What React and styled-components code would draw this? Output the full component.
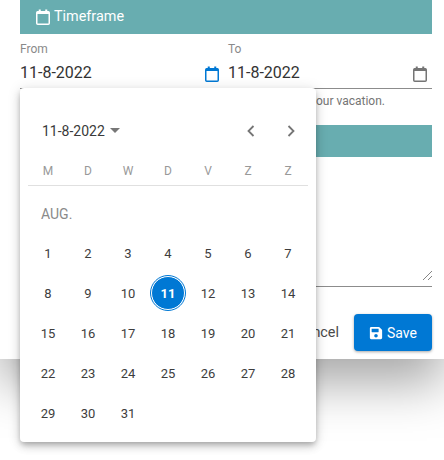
import React from "react";
import styled, { createGlobalStyle } from "styled-components";
import { FaSave } from "react-icons/fa";

const GlobalStyle = createGlobalStyle`
  html, body {
    margin: 0;
    height: 100%;
    background: #fff;
    overflow: hidden;
    font-family: Roboto, "Noto Sans", sans-serif;
  }
`

const Dialog = styled.div`
  position: relative;
  width: 444px;
  height: 359px;
  box-sizing: border-box;
  background: #fff;
  padding-left: 20px;
  padding-right: 12px;
  display: flex;
  flex-direction: column;
  box-shadow: 0 24px 48px rgba(0, 0, 0, 0.35);
`

const SectionBar = styled.div`
  height: ${props => props.$height}px;
  background: #68adb0;
  color: #fff;
  display: flex;
  align-items: center;
  gap: 3px;
  padding-left: 15px;
  padding-bottom: 2px;
  box-sizing: border-box;
  font-size: 14.4px;
`

const Fields = styled.div`
  display: grid;
  grid-template-columns: 208px 204px;
  margin-top: 8px;
`

const Field = styled.div`
  display: flex;
  flex-direction: column;
  height: 46px;
  border-bottom: 1px solid #8c8c8c;
`

const Label = styled.label`
  font-size: 12px;
  line-height: 14px;
  color: #8a8a8a;
`

const InputRow = styled.div`
  display: flex;
  align-items: center;
  justify-content: space-between;
  margin-top: 5px;
  padding-right: ${props => props.$inset}px;
  font-size: 16px;
  line-height: 24px;
  color: #333;
`

const CalendarIcon = styled.svg`
  width: 16px;
  height: 16px;
  margin-top: 2px;
  color: ${props => props.$color};
  flex-shrink: 0;
`

const Helper = styled.div`
  height: 36px;
  padding-top: 5px;
  box-sizing: border-box;
  font-size: 12px;
  line-height: 15px;
  color: #757575;
  text-align: right;
  padding-right: 47px;
`

const Notes = styled.div`
  position: relative;
  height: 129px;
  border-bottom: 1px solid #8c8c8c;
`

const ResizeHandle = styled.svg`
  position: absolute;
  right: 0;
  bottom: 6px;
  width: 9px;
  height: 9px;
`

const Actions = styled.div`
  display: flex;
  justify-content: flex-end;
  align-items: center;
  gap: 15px;
  margin-top: 27px;
`

const CancelButton = styled.button`
  border: 0;
  background: none;
  padding: 0;
  font: inherit;
  font-size: 14.4px;
  color: #4a4a4a;
`

const SaveButton = styled.button`
  width: 78px;
  height: 37px;
  border: 0;
  border-radius: 4px;
  background: #0078d4;
  color: #fff;
  font: inherit;
  font-size: 14px;
  display: flex;
  align-items: center;
  justify-content: center;
  gap: 4px;
  box-shadow: 0 1px 3px rgba(0, 0, 0, 0.35);
`

const Popup = styled.div`
  position: absolute;
  left: 20px;
  top: 88px;
  width: 296px;
  height: 354px;
  box-sizing: border-box;
  padding: 0 8px;
  background: #fff;
  border-radius: 4px;
  box-shadow: 0 3px 5px -1px rgba(0, 0, 0, 0.2), 0 5px 8px rgba(0, 0, 0, 0.14), 0 1px 14px rgba(0, 0, 0, 0.12);
`

const PopupHeader = styled.div`
  height: 77px;
  display: flex;
  align-items: center;
  justify-content: space-between;
  padding: 8px 0 0 14px;
  box-sizing: border-box;
`

const MonthPicker = styled.div`
  display: flex;
  align-items: center;
  gap: 5px;
  font-size: 14px;
  color: #3a3a3a;
`

const Caret = styled.span`
  width: 0;
  height: 0;
  border-left: 5px solid transparent;
  border-right: 5px solid transparent;
  border-top: 5px solid #777;
`

const Arrows = styled.div`
  display: flex;
  margin-right: -3px;
`

const ArrowButton = styled.div`
  width: 40px;
  height: 40px;
  display: flex;
  align-items: center;
  justify-content: center;
`

const WeekRow = styled.div`
  display: grid;
  grid-template-columns: repeat(7, 40px);
  height: 20px;
  border-bottom: 1px solid #e0e0e0;
`

const WeekDay = styled.span`
  text-align: center;
  font-size: 12px;
  line-height: 12px;
  color: #999;
`

const MonthLabel = styled.div`
  height: 47px;
  padding: 20px 0 0 13px;
  box-sizing: border-box;
  font-size: 14px;
  line-height: 16px;
  color: #8a8a8a;
`

const DayGrid = styled.div`
  display: grid;
  grid-template-columns: repeat(7, 40px);
  grid-auto-rows: 40px;
`

const Day = styled.div`
  display: flex;
  align-items: center;
  justify-content: center;
  font-size: 13px;
  color: #3d3d3d;
`

const SelectedDay = styled.div`
  width: 34px;
  height: 34px;
  box-sizing: border-box;
  border-radius: 50%;
  background: #0078d4;
  border: 1px solid #fff;
  outline: 1px solid #0078d4;
  display: flex;
  align-items: center;
  justify-content: center;
  color: #fff;
  font-weight: 700;
  font-size: 13px;
`

const Calendar = ({ color = "#757575" }) => (
  <CalendarIcon $color={color} viewBox="0 0 16 16" fill="none">
    <rect x="1.75" y="2.75" width="12.5" height="12.5" rx="1" stroke="currentColor" strokeWidth="1.5" />
    <rect x="2" y="2.5" width="12" height="2.5" fill="currentColor" />
    <path d="M4.75 0.5v3M11.25 0.5v3" stroke="currentColor" strokeWidth="2" />
  </CalendarIcon>
)

const Chevron = ({ d }) => (
  <svg width="14" height="14" viewBox="0 0 14 14" fill="none">
    <path d={d} stroke="#757575" strokeWidth="1.8" />
  </svg>
)

const weekDays = ["M", "D", "W", "D", "V", "Z", "Z"]
const days = Array.from({ length: 31 }, (_, i) => i + 1)

export default function App() {
  return (
    <>
      <GlobalStyle />
      <Dialog>
        <SectionBar $height={34}>
          <Calendar color="#fff" />
          Timeframe
        </SectionBar>
        <Fields>
          <Field>
            <Label>From</Label>
            <InputRow $inset={8}>
              11-8-2022
              <Calendar color="#0078d4" />
            </InputRow>
          </Field>
          <Field>
            <Label>To</Label>
            <InputRow $inset={4}>
              11-8-2022
              <Calendar />
            </InputRow>
          </Field>
        </Fields>
        <Helper>Select the dates of your vacation.</Helper>
        <SectionBar $height={32} />
        <Notes>
          <ResizeHandle viewBox="0 0 9 9">
            <path d="M0 9L9 0M5 9L9 5" stroke="#666" strokeWidth="0.8" />
          </ResizeHandle>
        </Notes>
        <Actions>
          <CancelButton>Cancel</CancelButton>
          <SaveButton>
            <FaSave size={14} />
            Save
          </SaveButton>
        </Actions>
      </Dialog>
      <Popup>
        <PopupHeader>
          <MonthPicker>
            11-8-2022
            <Caret />
          </MonthPicker>
          <Arrows>
            <ArrowButton><Chevron d="M9.5 2L4.5 7l5 5" /></ArrowButton>
            <ArrowButton><Chevron d="M4.5 2l5 5-5 5" /></ArrowButton>
          </Arrows>
        </PopupHeader>
        <WeekRow>
          {weekDays.map((d, i) => <WeekDay key={i}>{d}</WeekDay>)}
        </WeekRow>
        <MonthLabel>AUG.</MonthLabel>
        <DayGrid>
          {days.map(d => (
            <Day key={d}>{d === 11 ? <SelectedDay>{d}</SelectedDay> : d}</Day>
          ))}
        </DayGrid>
      </Popup>
    </>
  );
}
